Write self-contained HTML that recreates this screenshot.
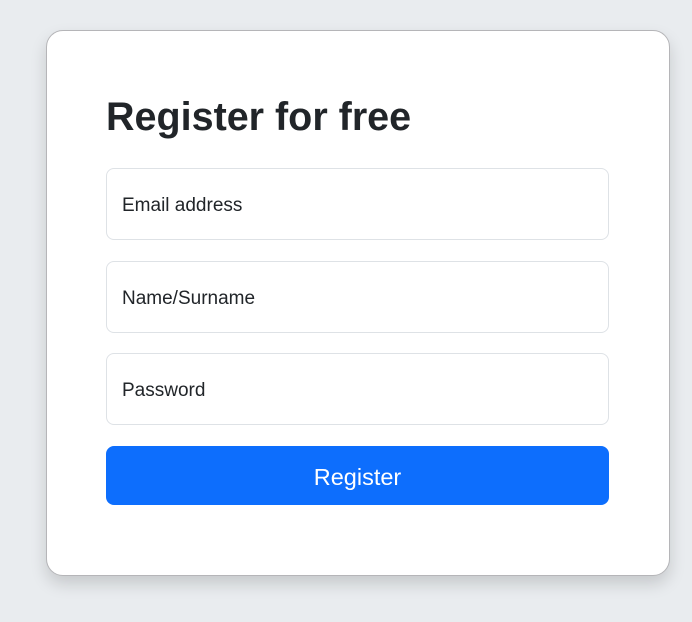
<!DOCTYPE html>
<html><head><meta charset="utf-8"><style>
html,body{margin:0;padding:0;width:692px;height:622px;background:#e9ecef;overflow:hidden;font-family:"Liberation Sans",sans-serif;}
.card{position:absolute;left:46px;top:30px;width:624px;height:546px;background:#fff;border:1px solid #b5b5b8;border-radius:17px;box-shadow:0 8px 16px rgba(0,0,0,0.15);box-sizing:border-box;}
h1{position:absolute;left:106px;top:93px;margin:0;font-size:39.5px;font-weight:bold;color:#212529;line-height:48px;letter-spacing:0;}
.in{position:absolute;left:106px;width:503px;height:72px;border:1px solid #dee2e6;border-radius:8px;box-sizing:border-box;background:#fff;font-size:19px;color:#212529;padding-left:15px;line-height:73px;}
.btn{position:absolute;left:106px;top:446px;width:503px;height:59px;background:#0d6efd;border-radius:8px;color:#fff;font-size:23.5px;text-align:center;line-height:62px;}
</style></head><body>
<div class="card"></div>
<h1>Register for free</h1>
<div class="in" style="top:168px">Email address</div>
<div class="in" style="top:261px">Name/Surname</div>
<div class="in" style="top:353px">Password</div>
<div class="btn">Register</div>
</body></html>
